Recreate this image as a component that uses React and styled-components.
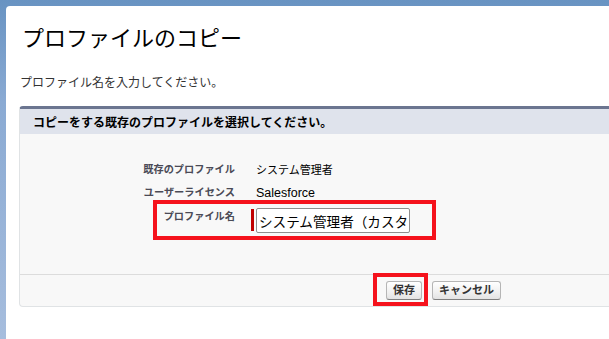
import React from "react";
import styled, { createGlobalStyle } from "styled-components";

const Global = createGlobalStyle`
  html, body { margin: 0; padding: 0; overflow: hidden; }
  body {
    width: 609px; height: 339px;
    background: linear-gradient(180deg, #6893c2 0%, #8aaad3 30%, #a6bddd 100%);
    font-family: "Liberation Sans", "Noto Sans CJK JP", sans-serif;
  }
`;

const Card = styled.div`
  margin: 6px 0 0 6px;
  width: 660px; height: 360px;
  background: #fff;
  border-radius: 4px 0 0 0;
  padding: 0 0 0 13px;
  box-sizing: border-box;
`;
const Title = styled.h1`
  margin: 0; padding: 21px 0 0 3px;
  font-size: 22px; font-weight: 400; line-height: 24px; color: #000;
`;
const Lead = styled.p`
  margin: 0; padding: 24px 0 0 1px;
  font-size: 12px; line-height: 16px; color: #333;
`;
const Block = styled.div`
  margin-top: 15px;
  width: 640px;
  border-top: 3px solid #6b7590;
  border-left: 1px solid #e0e3e5;
  border-bottom: 1px solid #e0e3e5;
  border-radius: 4px 0 0 4px;
  background: #f8f8f8;
`;
const Head = styled.div`
  height: 25px; padding-left: 13px;
  display: flex; align-items: center;
  background: #dfe3ec;
  font-size: 12px; font-weight: 700; color: #000;
`;
const Body = styled.div`
  display: grid;
  grid-template-columns: 215px 1fr;
  align-items: start;
  padding: 25px 0 37px;
  border-bottom: 1px solid #dcdcdc;
`;
const Label = styled.div`
  padding: ${p => (p.$top ? "6px" : "4px")} 0 4px;
  text-align: right;
  font-size: 10.2px; font-weight: 700; line-height: 14.5px; color: #4a4a56;
`;
const Value = styled.div`
  padding: 4px 0 4px 21px;
  font-size: ${p => p.$size || 11}px; line-height: 14.5px; color: #000;
`;
const Field = styled.div`
  position: relative;
  display: flex; gap: 2px;
  padding: 4px 0 4px 16px;
`;
const Req = styled.span`
  width: 3px; height: 22px; margin-top: 1px; background: #c00000;
`;
const Input = styled.input`
  width: 154px; height: 25px; box-sizing: border-box;
  padding: 0 2px;
  border: 1px solid #8f8f8f; border-radius: 2px;
  font-family: inherit; font-size: 13.6px; color: #000;
  background: #fff;
  outline: none;
`;
const Mark = styled.span`
  position: absolute;
  border: 4px solid #f5121c;
  pointer-events: none;
`;
const Foot = styled.div`
  position: relative;
  display: flex; gap: 10px;
  height: 31px; align-items: center;
  padding-left: 366px;
`;
const Button = styled.button`
  height: 19px; padding: 0 6px;
  border: 1px solid #b5b5b5; border-bottom-color: #7f7f7f;
  border-radius: 3px;
  background: linear-gradient(#ffffff, #f0f0f0 60%, #e3e3e3);
  font-family: inherit; font-size: 11px; font-weight: 700; color: #333;
  line-height: 17px;
`;

export default function App() {
  return (
    <>
      <Global />
      <Card>
        <Title>プロファイルのコピー</Title>
        <Lead>プロファイル名を入力してください。</Lead>
        <Block>
          <Head>コピーをする既存のプロファイルを選択してください。</Head>
          <Body>
            <Label>既存のプロファイル</Label>
            <Value>システム管理者</Value>
            <Label>ユーザーライセンス</Label>
            <Value $size={12.5}>Salesforce</Value>
            <Label $top>プロファイル名</Label>
            <Field>
              <Req />
              <Input defaultValue="システム管理者（カスタム）" />
              <Mark style={{ left: -82, top: -4, width: 275, height: 32 }} />
            </Field>
          </Body>
          <Foot>
            <Button>保存</Button>
            <Button>キャンセル</Button>
            <Mark style={{ left: 353, top: -2, width: 47, height: 25 }} />
          </Foot>
        </Block>
      </Card>
    </>
  );
}
